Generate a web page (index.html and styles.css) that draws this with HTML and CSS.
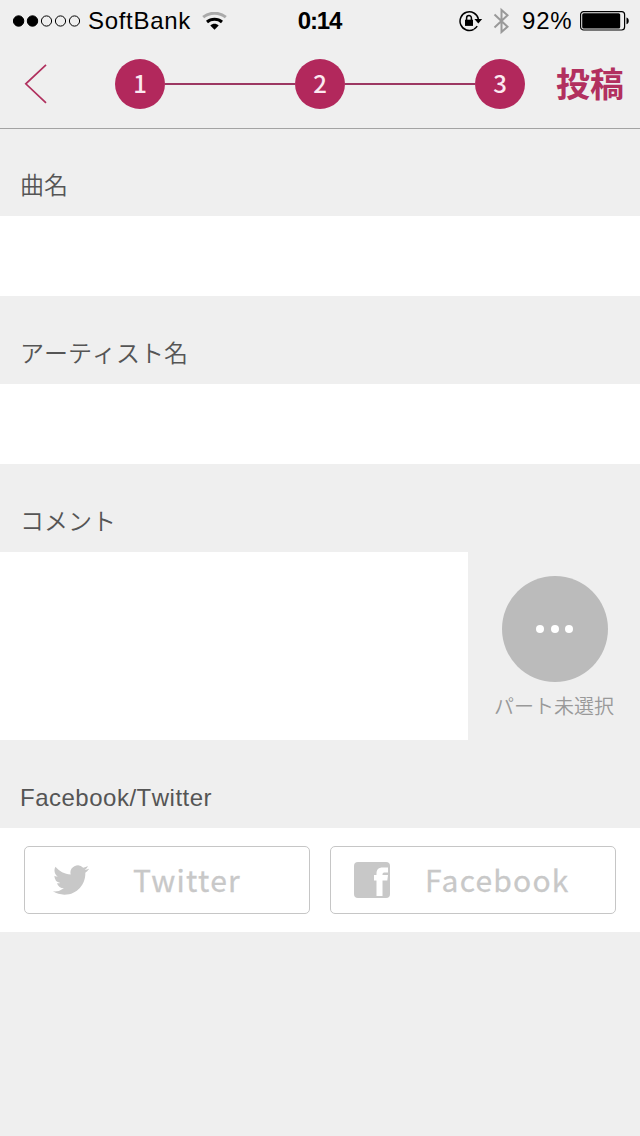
FILE: index.html
```html
<!DOCTYPE html>
<html lang="ja">
<head>
<meta charset="utf-8">
<title>投稿</title>
<link rel="stylesheet" href="styles.css">
</head>
<body>
<header class="header">
  <div class="status">
    <div class="status-left">
      <svg class="signal" width="68" height="12" viewBox="0 0 68 12" fill="none" stroke="#000" stroke-width="1">
        <circle cx="5.6" cy="6" r="5.2" fill="#000"/><circle cx="19.5" cy="6" r="5.2" fill="#000"/>
        <circle cx="33.5" cy="6" r="5.1"/><circle cx="47.5" cy="6" r="5.1"/><circle cx="61.5" cy="6" r="5.1"/>
      </svg>
      <span class="carrier">SoftBank</span>
      <svg class="wifi" width="25" height="19" viewBox="0 0 25 19" fill="none" stroke-width="3">
        <path d="M1.2 5.2C7.6-.1 17.4-.1 23.8 5.2" stroke="#aaa"/>
        <path d="M5 10c4.2-3.700 10.800-3.700 15 0" stroke="#000"/>
        <path d="M8.300 13.500c2.400-2.200 6-2.200 8.400 0L12.500 17.700z" fill="#000" stroke="none"/>
      </svg>
    </div>
    <span class="clock">0:14</span>
    <div class="status-right">
      <svg class="lock" width="24" height="22" viewBox="0 0 24 22" fill="none" stroke="#000">
        <path d="M14.8 19.3A9.3 9.3 0 1 1 19.4 9" stroke-width="1.5"/>
        <path d="M15 19.2a9.3 9.3 0 0 0 3.2-3" stroke-width="1.5"/>
        <path d="M15.4 9h7.8l-3.9 4.6z" fill="#000" stroke="none"/>
        <path d="M6 9.7h8v6.2H6z" fill="#000" stroke="none"/>
        <path d="M7.6 10V8a2.4 2.4 0 0 1 4.8 0v2" stroke-width="1.5"/>
      </svg>
      <svg class="bluetooth" width="17" height="28" viewBox="0 0 17 28" fill="none" stroke="#999" stroke-width="2">
        <path d="M1.5 7.5l13 12.3L8.5 25V3l6 5.2-13 12.3"/>
      </svg>
      <span class="percent">92%</span>
      <svg class="battery" width="50" height="20" viewBox="0 0 50 20">
        <rect x=".6" y=".6" width="44" height="18.4" rx="3" fill="none" stroke="#000" stroke-width="1.2"/>
        <rect x="2.2" y="2.2" width="38" height="15.2" rx="1.5"/>
        <path d="M46.5 6.5c3 1 3 5.8 0 6.8z"/>
      </svg>
    </div>
  </div>
  <nav class="nav">
    <svg class="back" width="24" height="40" viewBox="0 0 24 40" fill="none" stroke="#b0305e" stroke-width="1.7"><path d="M22 .8L1.8 19.8 22 38.8"/></svg>
    <div class="steps">
      <span class="step">1</span><span class="line"></span>
      <span class="step">2</span><span class="line"></span>
      <span class="step">3</span>
    </div>
    <span class="post">投稿</span>
  </nav>
</header>
<main>
  <div class="label">曲名</div>
  <div class="field"></div>
  <div class="label">アーティスト名</div>
  <div class="field"></div>
  <div class="label">コメント</div>
  <div class="comment-row">
    <div class="comment"></div>
    <div class="part">
      <div class="part-icon"><i class="dot"></i><i class="dot"></i><i class="dot"></i></div>
      <span class="part-name">パート未選択</span>
    </div>
  </div>
  <div class="label latin">Facebook/Twitter</div>
  <div class="share">
    <div class="button twitter">
      <svg width="36" height="30" viewBox="0 2 24 20" fill="#c8c8c8"><path d="M23.953 4.57a10 10 0 01-2.825.775 4.958 4.958 0 002.163-2.723c-.951.555-2.005.959-3.127 1.184a4.92 4.92 0 00-8.384 4.482C7.69 8.095 4.067 6.13 1.64 3.162a4.822 4.822 0 00-.666 2.475c0 1.71.87 3.213 2.188 4.096a4.904 4.904 0 01-2.228-.616v.06a4.923 4.923 0 003.946 4.827 4.996 4.996 0 01-2.212.085 4.936 4.936 0 004.604 3.417 9.867 9.867 0 01-6.102 2.105c-.39 0-.779-.023-1.17-.067a13.995 13.995 0 007.557 2.209c9.053 0 13.998-7.496 13.998-13.985 0-.21 0-.42-.015-.63A9.935 9.935 0 0024 4.59z"/></svg>
      <span>Twitter</span>
    </div>
    <div class="button facebook">
      <svg width="36" height="36" viewBox="0 0 36 36"><rect width="36" height="36" rx="4" fill="#c8c8c8"/><path d="M22.500 34V18.500H20v-5.500h2.500V11.500c0-4 2.200-6 6-6H34v5h-3c-1.700 0-2.500.5-2.500 2v.5H34l-.7 5.500h-4.800v15.500z" fill="#fff"/></svg>
      <span>Facebook</span>
    </div>
  </div>
</main>
</body>
</html>
```

FILE: styles.css
```css
* { box-sizing: border-box; }
body {
  margin: 0;
  min-height: 1136px;
  background: #efefef;
  color: #555;
  font-family: "Liberation Sans", "Noto Sans CJK JP", sans-serif;
  white-space: nowrap;
}
svg { display: block; flex: none; }
.header { height: 129px; border-bottom: 1px solid #a3a3a3; }
.status {
  display: grid;
  grid-template-columns: 1fr 46px 1fr;
  height: 40px;
  padding: 1px 10px 0 13px;
  align-items: center;
  color: #000;
  font-size: 24px;
  line-height: 40px;
}
.status-left, .status-right { display: flex; align-items: center; height: 40px; }
.status-right { justify-content: flex-end; }
.carrier { margin-left: 7px; width: 114px; letter-spacing: .7px; }
.percent { margin-left: 11px; width: 58px; letter-spacing: .8px; }
.clock { margin-left: -4px; font-weight: 700; letter-spacing: -1.1px; text-align: center; }
.bluetooth { margin-left: 10px; margin-right: 1px; }
.nav { display: flex; align-items: center; height: 88px; padding-left: 24px; }
.back { margin-right: 67px; }
.steps { display: flex; align-items: center; width: 410px; }
.step {
  width: 50px;
  height: 50px;
  border-radius: 50%;
  background: #b2285c;
  color: #fbe9f0;
  font: 500 24px/48px "Noto Sans CJK JP", sans-serif;
  text-align: center;
}
.line { flex: 1; height: 2px; background: #9c3762; }
.post { margin-left: 31px; padding-bottom: 3px; color: #b2305f; font: 700 34px/85px "Noto Sans CJK JP", sans-serif; }
.label {
  height: 88px;
  padding: 26px 20px 0;
  font: 350 24px/59px "Noto Sans CJK JP", sans-serif;
  font-kerning: none;
}
.header + main > .label:first-child { height: 87px; padding-top: 25px; }
.label.latin { font-family: "Liberation Sans", sans-serif; font-weight: 400; letter-spacing: .5px; padding-top: 28px; }
.field { height: 80px; background: #fff; }
.comment-row { display: flex; height: 188px; }
.comment { width: 468px; background: #fff; }
.part { display: flex; flex: 1; flex-direction: column; align-items: center; padding: 24px 0 0 2px; }
.part-icon {
  display: flex;
  align-items: center;
  justify-content: center;
  gap: 6.5px;
  width: 106px;
  height: 106px;
  padding-right: 1px;
  border-radius: 50%;
  background: #bbb;
}
.dot { width: 8px; height: 8px; border-radius: 50%; background: #fff; }
.part-name { margin: 9px 2px 0 0; color: #999; font: 350 20px/30px "Noto Sans CJK JP", sans-serif; }
.share { display: grid; grid-template-columns: 1fr 1fr; gap: 20px; height: 104px; padding: 18px 24px; background: #fff; }
.button {
  display: flex;
  align-items: center;
  border: 1px solid #c6c6c6;
  border-radius: 5px;
  color: #c8c8c8;
  font: 400 30px/64px "Noto Sans CJK JP", sans-serif;
}
.button span { padding-bottom: 2px; -webkit-text-stroke: .3px #c8c8c8; }
.twitter { padding-left: 28px; letter-spacing: 1.3px; }
.twitter span { margin-left: 44px; }
.facebook { padding-left: 23px; letter-spacing: 1.2px; }
.facebook span { margin-left: 35px; }
```
